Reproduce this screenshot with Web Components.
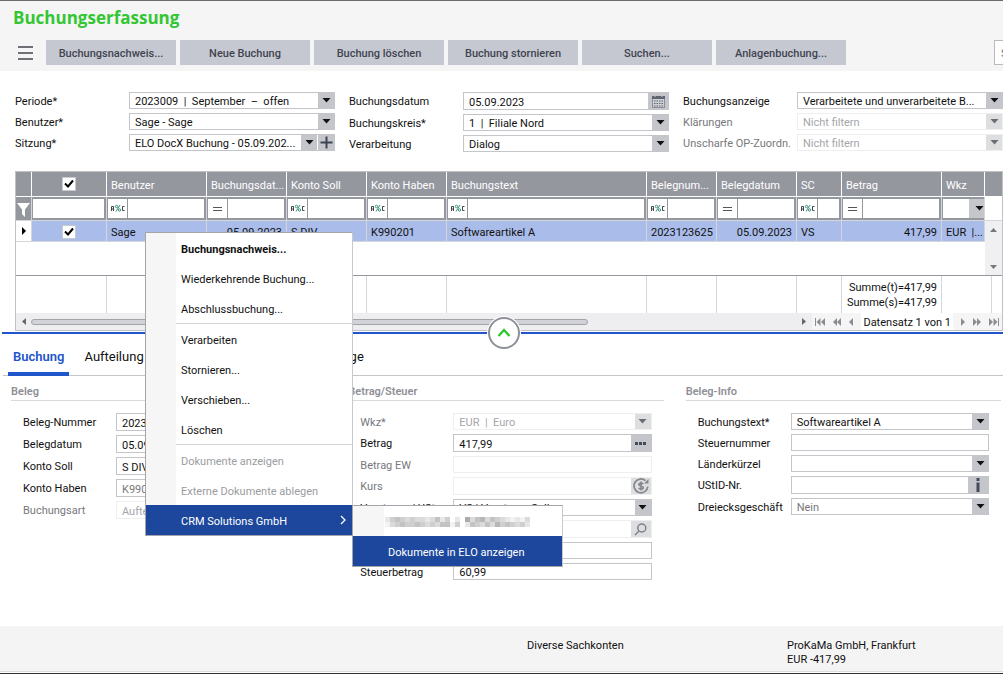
<!DOCTYPE html>
<html lang="de">
<head>
<meta charset="utf-8">
<title>Buchungserfassung</title>
<style>
  html, body { margin: 0; }
  body {
    font: 11px/16px Roboto, "Open Sans", sans-serif;
    color: #111;
    background: #fff;
    overflow: hidden;
    --line: #c4c5c9;
    --fill: #c5c6cb;
    --head: #95979f;
    --blue: #2155cb;
    --menu: #1c479d;
  }
</style>
</head>
<body>
<booking-app></booking-app>

<template id="tpl-app">
  <style>
    :host { display: flex; flex-direction: column; min-height: 100vh; position: relative; box-sizing: border-box; border-bottom: 1px solid #333; }
    .filters { display: grid; grid-template-columns: repeat(3, minmax(0, 1fr)); gap: 14px; padding: 21px 0 0 15px; }
    .stack { display: flex; flex-direction: column; gap: 4px; --label: 114px; }
    .gridwrap { padding: 19px 0 0 15px; }
    .details { display: grid; grid-template-columns: repeat(3, minmax(0, 1fr)); gap: 22px; padding: 6px 2px 0 11px; }
    status-bar { margin-top: auto; }
    context-menu { position: absolute; left: 145px; top: 232px; z-index: 3; }
  </style>
  <app-header></app-header>
  <form class="filters">
    <div class="stack">
      <form-field label="Periode*" kind="select" value="2023009  |  September  –  offen"></form-field>
      <form-field label="Benutzer*" kind="select" value="Sage - Sage"></form-field>
      <form-field label="Sitzung*" kind="select" extra value="ELO DocX Buchung - 05.09.202..."></form-field>
    </div>
    <div class="stack">
      <form-field label="Buchungsdatum" kind="calendar" value="05.09.2023"></form-field>
      <form-field label="Buchungskreis*" kind="select" value="1  |  Filiale Nord"></form-field>
      <form-field label="Verarbeitung" kind="select" value="Dialog"></form-field>
    </div>
    <div class="stack">
      <form-field label="Buchungsanzeige" kind="select" value="Verarbeitete und unverarbeitete B..."></form-field>
      <form-field label="Klärungen" kind="select" disabled value="Nicht filtern"></form-field>
      <form-field label="Unscharfe OP-Zuordn." kind="select" disabled value="Nicht filtern"></form-field>
    </div>
  </form>
  <div class="gridwrap"><booking-grid></booking-grid></div>
  <split-bar></split-bar>
  <tab-strip></tab-strip>
  <form class="details">
    <form-section heading="Beleg">
      <form-field label="Beleg-Nummer" kind="tall" value="2023123625"></form-field>
      <form-field label="Belegdatum" kind="tall" value="05.09.2023"></form-field>
      <form-field label="Konto Soll" kind="tall" value="S DIV"></form-field>
      <form-field label="Konto Haben" kind="tall" muted value="K990201"></form-field>
      <form-field label="Buchungsart" kind="tall" disabled value="Aufteilung"></form-field>
    </form-section>
    <form-section heading="Betrag/Steuer">
      <form-field label="Wkz*" kind="select" disabled value="EUR  |  Euro"></form-field>
      <form-field label="Betrag" kind="more" value="417,99"></form-field>
      <form-field label="Betrag EW" disabled value=""></form-field>
      <form-field label="Kurs" kind="rate" disabled value=""></form-field>
      <form-field label="Vorsteuer / USt" kind="select" value="VS | Vorsteuer Soll"></form-field>
      <form-field name="Steuercode" kind="search" disabled value=""></form-field>
      <form-field name="Steuersatz" value=""></form-field>
      <form-field label="Steuerbetrag" value="60,99"></form-field>
    </form-section>
    <form-section heading="Beleg-Info">
      <form-field label="Buchungstext*" kind="select" value="Softwareartikel A"></form-field>
      <form-field label="Steuernummer" value=""></form-field>
      <form-field label="Länderkürzel" kind="select" value=""></form-field>
      <form-field label="UStID-Nr." kind="info" value=""></form-field>
      <form-field label="Dreiecksgeschäft" kind="select" muted value="Nein"></form-field>
    </form-section>
  </form>
  <status-bar></status-bar>
  <context-menu></context-menu>
</template>

<template id="tpl-header">
  <style>
    :host { display: block; background: #f5f5f5; border-top: 1px solid #6b696b; padding-bottom: 6px; }
    h1 { margin: 0; padding: 5px 13px 10px; font: 700 17px/24px "Open Sans", "Noto Sans", sans-serif; color: #33c633; }
    nav { display: flex; align-items: center; gap: 4px; padding-left: 18px; overflow: hidden; }
    button { font: inherit; border: 0; padding: 0; cursor: pointer; }
    .burger { width: 24px; height: 25px; background: none; flex: none; text-align: left; }
    .burger svg { display: block; }
    .act { flex: 0 0 130px; height: 25px; padding-top: 2px; background: #c6c8d1; color: #3f4450; font-weight: 500; }
    input { box-sizing: border-box; flex: 0 0 160px; height: 25px; margin: 0 -151px 0 auto; border: 1px solid #b9bac0; padding: 2px 6px 0; font: inherit; background: #fff; outline: 0; }
    input::placeholder { color: #777; opacity: 1; }
  </style>
  <h1>Buchungserfassung</h1>
  <nav>
    <button class="burger" aria-label="Menü"><svg width="16" height="16" viewBox="0 0 16 16"><path d="M0 2h15M0 8h15M0 14h15" stroke="#6f7075" stroke-width="2"/></svg></button>
    <button class="act">Buchungsnachweis...</button>
    <button class="act">Neue Buchung</button>
    <button class="act">Buchung löschen</button>
    <button class="act">Buchung stornieren</button>
    <button class="act">Suchen...</button>
    <button class="act">Anlagenbuchung...</button>
    <input type="search" aria-label="Suche" placeholder="Suche">
  </nav>
</template>

<template id="tpl-grid">
  <style>
    :host { display: block; border: 1px solid #c2c2c6; }
    table { width: 100%; table-layout: fixed; border-spacing: 0; }
    th, td { box-sizing: border-box; padding: 0; text-align: left; font-weight: 400; white-space: nowrap; overflow: hidden; }
    .h th { height: 25px; background: var(--head); color: #fff; padding: 4px 0 0 4px; border-right: 1px solid #fff; border-bottom: 1px solid #fff; }
    .f td { height: 24px; background: var(--head); border-right: 1px solid #d5d6da; border-bottom: 1px solid #d5d6da; padding: 2px 1px; }
    .f td.icon { padding: 2px 0 0 0; }
    .f td.flush { padding-right: 0; }
    .f td.flush .box { margin: 0; }
    .f svg { display: block; }
    .box { display: flex; height: 19px; background: #fff; margin: 0 1px 0 0; }
    .box span { flex: 0 0 19px; border-right: 1px solid var(--head); display: flex; align-items: center; justify-content: center; }
    .box input { flex: 1; min-width: 0; border: 0; padding: 0 2px; background: none; font: inherit; outline: 0; height: 19px; box-sizing: border-box; }
    .box i { flex: 0 0 15px; background: var(--fill); display: flex; align-items: center; justify-content: flex-end; }
    .d td { height: 21px; padding: 3px 0 0 4px; background: #a9bcea; border-right: 1px solid #d5d6da; border-bottom: 1px solid #d5d6da; line-height: 17px; }
    .d td.cur { background: #fff; padding: 0; }
    .d td.r, .s td.r { text-align: right; padding-right: 4px; }
    .ck { text-align: center !important; padding: 0 !important; }
    input[type=checkbox] { appearance: none; width: 14px; height: 14px; margin: 0; vertical-align: middle; border: 1px solid #c8c9ce; background: #fff url('data:image/svg+xml,<svg xmlns="http://www.w3.org/2000/svg" viewBox="0 0 12 12"><path d="M2 5.5l3 3 5-6" fill="none" stroke="black" stroke-width="2"/></svg>'); }
    .d td.sb { background: #f0f0f2; padding: 0; border-right: 0; border-bottom: 1px solid var(--head); vertical-align: top; }
    .bar { display: flex; flex-direction: column; justify-content: space-between; align-items: center; height: 54px; padding: 7px 0 6px; box-sizing: border-box; }
    .e td { height: 34px; border-bottom: 1px solid var(--head); }
    .s td { height: 37px; border-right: 1px solid #d5d6da; padding: 0 4px; line-height: 15px; }
    .s td:last-child { border-right: 0; padding: 0; }
    .s u { display: block; width: 6px; height: 37px; border-right: 1px solid #d5d6da; }
    .foot { display: flex; height: 17px; background: #eeeef0; align-items: center; color: #808186; }
    .track { flex: 1; display: flex; align-items: center; padding: 0 6px; }
    .thumb { box-sizing: border-box; width: 71%; height: 6px; margin-left: 5px; border: 1px solid #a3a4aa; border-radius: 3px; background: #d2d3d8; }
    .track svg:last-child { margin-left: auto; }
    .nav { display: flex; align-items: center; gap: 8px; padding: 0 3px; background: #f5f5f6; height: 17px; }
    .nav span { background: #fff; color: #111; padding: 2px 2px 0; height: 15px; white-space: nowrap; }
    svg { flex: none; }
  </style>
  <table>
    <colgroup>
      <col style="width:16px"><col style="width:75px"><col style="width:100px"><col style="width:80px"><col style="width:80px"><col style="width:80px"><col><col style="width:70px"><col style="width:80px"><col style="width:45px"><col style="width:100px"><col style="width:43px"><col style="width:17px">
    </colgroup>
    <tr class="h"><th></th><th class="ck"><input type="checkbox" checked aria-label="Alle"></th><th>Benutzer</th><th>Buchungsdat...</th><th>Konto Soll</th><th>Konto Haben</th><th>Buchungstext</th><th>Belegnum...</th><th>Belegdatum</th><th>SC</th><th>Betrag</th><th>Wkz</th><th style="border-right:0"></th></tr>
    <tr class="f" id="filter"></tr>
    <tr class="d">
      <td class="cur"><svg width="15" height="20" viewBox="0 0 15 20" style="display:block"><path d="M6 6l4 4-4 4z"/></svg></td>
      <td class="ck"><input type="checkbox" checked aria-label="Verarbeitet"></td><td>Sage</td><td class="r">05.09.2023</td><td>S DIV</td><td>K990201</td><td>Softwareartikel A</td><td>2023123625</td><td class="r">05.09.2023</td><td>VS</td><td class="r">417,99</td><td>EUR&nbsp; |...</td>
      <td class="sb" rowspan="2"><div class="bar"><svg width="7" height="4"><path d="M0 4L3.5 0L7 4z" fill="#77787c"/></svg><svg width="7" height="4"><path d="M0 0L3.500 4L7 0z" fill="#77787c"/></svg></div></td>
    </tr>
    <tr class="e"><td colspan="12"></td></tr>
    <tr class="s"><td colspan="2"></td><td></td><td></td><td></td><td></td><td></td><td></td><td></td><td></td><td class="r">Summe(t)=417,99<br>Summe(s)=417,99</td><td style="border-right:0"></td><td><u></u></td></tr>
  </table>
  <div class="foot">
    <div class="track"><svg width="4" height="7"><path d="M4 0v7L0 3.500z" fill="#66676b"/></svg><div class="thumb"></div><svg width="4" height="7"><path d="M0 0v7l4-3.500z" fill="#66676b"/></svg></div>
    <div class="nav">
      <svg width="10" height="8" fill="#8c8d92"><path d="M0 0h1v8h-1zM5.500 0v8L1.500 4zM10 0v8L6 4z"/></svg>
      <svg width="8" height="8" fill="#8c8d92"><path d="M4 0v8L0 4zM8 0v8L4 4z"/></svg>
      <svg width="4" height="8" fill="#8c8d92"><path d="M4 0v8L0 4z"/></svg>
      <span>Datensatz 1 von 1</span>
      <svg width="4" height="8" fill="#8c8d92"><path d="M0 0v8l4-4z"/></svg>
      <svg width="8" height="8" fill="#8c8d92"><path d="M0 0v8l4-4zM4 0v8l4-4z"/></svg>
      <svg width="10" height="8" fill="#8c8d92"><path d="M0 0v8l4-4zM4.500 0v8l4-4zM9 0h1v8h-1z"/></svg>
    </div>
  </div>
</template>

<template id="tpl-split">
  <style>
    :host { display: block; position: relative; height: 2px; margin: 1px 0 0 2px; background: var(--blue); }
    button { position: absolute; left: 50%; top: -15px; margin-left: -15px; width: 32px; height: 32px; padding: 0; border: 2px solid #8f919a; border-radius: 50%; background: #fff; box-shadow: 0 0 0 1px #fff; z-index: 1; }
    svg { display: block; margin: auto; }
  </style>
  <button aria-label="Einklappen"><svg width="14" height="10" viewBox="0 0 14 10"><path d="M1.500 8L7 2l5.500 6" fill="none" stroke="#33c633" stroke-width="2.500"/></svg></button>
</template>

<template id="tpl-tabs">
  <style>
    :host { display: block; margin-left: 3px; border-bottom: 1px solid #c4c5c9; height: 41px; }
    nav { display: flex; padding-left: 5px; gap: 10px; height: 42px; }
    a { box-sizing: border-box; padding: 13px 5px 0; font-size: 13px; line-height: 20px; color: #111; text-decoration: none; white-space: nowrap; }
    a.on { color: var(--blue); font-weight: 600; border-bottom: 4px solid var(--blue); }
    a.far { margin-left: 160px; }
  </style>
  <nav><a class="on" href="#buchung">Buchung</a><a href="#aufteilung">Aufteilung</a><a class="far" href="#anlage">Anlage</a></nav>
</template>

<template id="tpl-section">
  <style>
    :host { display: block; --label: 93px; }
    h2 { margin: 0; padding-top: 2px; font-size: 11px; line-height: 16px; font-weight: 600; color: #8f9096; border-bottom: 1px solid #d9dadc; }
    div { display: flex; flex-direction: column; gap: 4px; padding: 12px 12px 0 12px; }
  </style>
  <h2></h2><div><slot></slot></div>
</template>

<template id="tpl-field">
  <style>
    :host { display: flex; height: 17px; align-items: center; }
    :host([kind=tall]), :host([kind=calendar]), :host([kind=more]), :host([kind=rate]), :host([kind=search]), :host([kind=info]) { height: 18px; }
    label { flex: 0 0 var(--label); padding-top: 2px; white-space: nowrap; line-height: 16px; }
    .c { flex: 1; min-width: 0; height: 100%; box-sizing: border-box; display: flex; border: 1px solid var(--line); background: #fff; }
    .c > select, .c > input { flex: 1; min-width: 0; box-sizing: border-box; appearance: none; border: 0; margin: 0; padding: 2px 0 0 5px; background: none; font: inherit; line-height: 14px; color: inherit; outline: 0; opacity: 1; white-space: pre; height: 100%; }
    .c > span, .c > button { flex: none; display: flex; align-items: center; justify-content: center; width: 16px; padding: 0; border: 0; background: var(--fill); }
    .c > button { width: 20px; }
    .c > button.plus { width: 17px; border-left: 1px solid #fff; }
    :host([muted]) .c { color: #77787c; }
    :host([disabled]) label { color: #77787c; }
    :host([disabled]) .c { border-color: #efeff0; color: #a5a6ab; }
    :host([disabled]) .c > span, :host([disabled]) .c > button { background: #dddee0; }
    :host([disabled]) .c > span path { fill: #6c6d72; }
    svg { display: block; flex: none; }
  </style>
  <label for="f"></label><div class="c"></div>
</template>

<template id="tpl-status">
  <style>
    :host { display: block; background: #f4f4f4; border-bottom: 1px solid #dcdcde; margin-bottom: 1px; }
    div { display: grid; grid-template-columns: 527px 260px 1fr; line-height: 14px; padding: 13px 0 4px; height: 28px; }
    p { margin: 0; }
  </style>
  <div><p></p><p>Diverse Sachkonten</p><p>ProKaMa GmbH, Frankfurt<br>EUR -417,99</p></div>
</template>

<template id="tpl-menu">
  <style>
    :host { display: block; width: 206px; border: 1px solid #a3a5ab; border-right-color: #c8c9cc; background: linear-gradient(90deg, #f6f6f6 30px, #fff 30px); }
    hr { border: 0; margin: 0 0 0 30px; height: 1px; background: #d2d3d6; }
    .sub { position: absolute; left: 206px; top: 272px; width: 209px; border: 1px solid #a3a5ab; border-right-color: #c8c9cc; background: linear-gradient(90deg, #f6f6f6 31px, #fff 31px); }
    .mosaic { height: 30px; padding: 2px 0 0 32px; box-sizing: border-box; display: flex; align-items: center; }
  </style>
  <menu-item strong>Buchungsnachweis...</menu-item>
  <menu-item>Wiederkehrende Buchung...</menu-item>
  <menu-item>Abschlussbuchung...</menu-item>
  <hr>
  <menu-item>Verarbeiten</menu-item>
  <menu-item>Stornieren...</menu-item>
  <menu-item>Verschieben...</menu-item>
  <menu-item>Löschen</menu-item>
  <hr>
  <menu-item off>Dokumente anzeigen</menu-item>
  <menu-item off>Externe Dokumente ablegen</menu-item>
  <menu-item on arrow>CRM Solutions GmbH</menu-item>
  <div class="sub">
    <div class="mosaic"><svg id="mosaic" width="145" height="10" aria-hidden="true"></svg></div>
    <menu-item on>Dokumente in ELO anzeigen</menu-item>
  </div>
</template>

<template id="tpl-item">
  <style>
    :host { display: block; }
    button { display: flex; justify-content: space-between; align-items: center; width: 100%; height: 30px; padding: 0 6px 0 35px; border: 0; background: none; font: inherit; color: #111; text-align: left; white-space: nowrap; }
    span { padding-top: 4px; }
    :host([strong]) button { font-weight: 700; }
    :host([off]) button { color: #9b9ca1; }
    :host([on]) button { background: var(--menu); color: #fff; }
    svg { display: none; }
    :host([arrow]) svg { display: block; }
  </style>
  <button><span><slot></slot></span><svg width="6" height="10" viewBox="0 0 6 10"><path d="M1 1l4 4-4 4" fill="none" stroke="#fff" stroke-width="1.300"/></svg></button>
</template>

<script>
  class Base extends HTMLElement {
    constructor(id) {
      super();
      this.attachShadow({ mode: 'open' }).append(document.getElementById(id).content.cloneNode(true));
    }
  }
  const simple = (name, id) => customElements.define(name, class extends Base { constructor() { super(id); } });

  const ARROW = '<svg width="9" height="5"><path d="M0.500 0h8L4.500 4.500z" fill="#111"/></svg>';
  const ICONS = {
    calendar: '<svg width="13" height="13" viewBox="0 0 13 13"><path d="M0 1h13v12H0z" fill="#8b8f99"/><path d="M0 1h13v3H0z" fill="#5f6470"/><path d="M3 0v2M10 0v2" stroke="#c5c6cb"/><path d="M1 4h11v8H1z" fill="#cfd0d5"/><path d="M2 6h9M2 8.500h9M2 11h9" stroke="#5f6470" stroke-width="1.200" stroke-dasharray="1.500 1"/></svg>',
    more: '<svg width="12" height="3"><path d="M0 0h3v3h-3zM4 0h3v3h-3zM8 0h3v3h-3z" fill="#444a58"/></svg>',
    rate: '<svg width="16" height="16" viewBox="0 0 16 16" fill="none" stroke="#85878d" stroke-width="1.700"><path d="M14.800 8.500A6.900 6.900 0 1 1 12.500 2.700"/><path d="M11 5.500h4.500V1z" fill="#85878d" stroke="none"/><path d="M10.200 5.800C9 4.600 5.800 4.900 5.900 6.600 6 8.500 10.200 7.400 10.300 9.500 10.300 11.400 7 11.500 5.700 10.200M8 3.500v9"/></svg>',
    search: '<svg width="13" height="13" viewBox="0 0 13 13" fill="none" stroke="#7e8088" stroke-width="1.500"><circle cx="7.800" cy="5" r="4"/><path d="M5 8L1 12"/></svg>',
    info: '<svg width="4" height="14"><path d="M0.500 0h3v3h-3zM0.500 4.500h3v9.500h-3z" fill="#444a58"/></svg>'
  };

  customElements.define('form-field', class extends Base {
    constructor() { super('tpl-field'); }
    connectedCallback() {
      const kind = this.getAttribute('kind'), value = this.getAttribute('value') || '';
      const box = this.shadowRoot.querySelector('.c');
      this.shadowRoot.querySelector('label').textContent = this.getAttribute('label') || '';
      const text = value.replace(/ {2}/g, ' \u00a0');
      let ctl;
      if (kind === 'select') {
        ctl = document.createElement('select');
        ctl.append(new Option(text));
      } else {
        ctl = document.createElement('input');
        ctl.type = 'text';
        ctl.value = value;
      }
      ctl.id = 'f';
      if (this.hasAttribute('name')) ctl.setAttribute('aria-label', this.getAttribute('name'));
      ctl.disabled = this.hasAttribute('disabled');
      box.append(ctl);
      if (kind === 'select') box.insertAdjacentHTML('beforeend', '<span>' + ARROW + '</span>');
      if (ICONS[kind]) box.insertAdjacentHTML('beforeend', '<button type="button" aria-label="Auswahl">' + ICONS[kind] + '</button>');
      if (this.hasAttribute('extra')) box.insertAdjacentHTML('beforeend', '<button type="button" class="plus" aria-label="Neu"><svg width="13" height="13"><path d="M6.500 0.500v12M0.500 6.500h12" stroke="#3f4452" stroke-width="2"/></svg></button>');
    }
  });

  customElements.define('booking-grid', class extends Base {
    constructor() {
      super('tpl-grid');
      const kinds = ['', 'a', 'e', 'a', 'a', 'a', 'a', 'e', 'a', 'e', 'd'];
      const names = ['Auswahl', 'Benutzer', 'Buchungsdatum', 'Konto Soll', 'Konto Haben', 'Buchungstext', 'Belegnummer', 'Belegdatum', 'SC', 'Betrag', 'Wkz'];
      const lead = { '': '', d: '',
        a: '<span><svg width="16" height="9" fill="none"><path d="M1.500 7V2.500h2V7M1.500 5h2M14.500 2.500h-2v4h2" stroke="#444"/><circle cx="6.500" cy="2.500" r="1.200" stroke="#3d9184"/><circle cx="9.500" cy="6" r="1.200" stroke="#3d9184"/><path d="M10 1L6 7.500" stroke="#3d9184"/></svg></span>',
        e: '<span><svg width="9" height="4"><path d="M0 .5h9M0 3.500h9" stroke="#555"/></svg></span>' };
      this.shadowRoot.getElementById('filter').innerHTML =
        '<td class="icon"><svg width="15" height="19" viewBox="0 0 15 19"><path d="M1 3h13L9 9.500V17L6 14V9.500z" fill="#fff"/></svg></td>' +
        kinds.map((k, i) => '<td' + (k === 'd' ? ' class="flush"' : '') + '><div class="box">' + lead[k] + '<input aria-label="' + names[i] + '">' + (k === 'd' ? '<i>' + ARROW + '</i>' : '') + '</div></td>').join('') +
        '<td style="background:#fff;border-right:0"></td>';
    }
  });

  customElements.define('form-section', class extends Base {
    constructor() { super('tpl-section'); }
    connectedCallback() { this.shadowRoot.querySelector('h2').textContent = this.getAttribute('heading'); }
  });

  simple('menu-item', 'tpl-item');
  customElements.define('context-menu', class extends Base {
    constructor() {
      super('tpl-menu');
      // Redacted entry: two rows of grey blocks, each digit sets how dark a block is.
      const rows = ['24543433235240207356354321213', '13454454343551402543536454342'];
      this.shadowRoot.getElementById('mosaic').innerHTML = rows.map((r, y) =>
        [...r].map((v, x) => '<rect x="' + x * 5 + '" y="' + y * 5 + '" width="5" height="5" fill="rgb(' + Array(3).fill(255 - v * 12).join() + ')"/>').join('')).join('');
    }
  });
  simple('app-header', 'tpl-header');
  simple('split-bar', 'tpl-split');
  simple('tab-strip', 'tpl-tabs');
  simple('status-bar', 'tpl-status');
  simple('booking-app', 'tpl-app');
</script>
</body>
</html>
